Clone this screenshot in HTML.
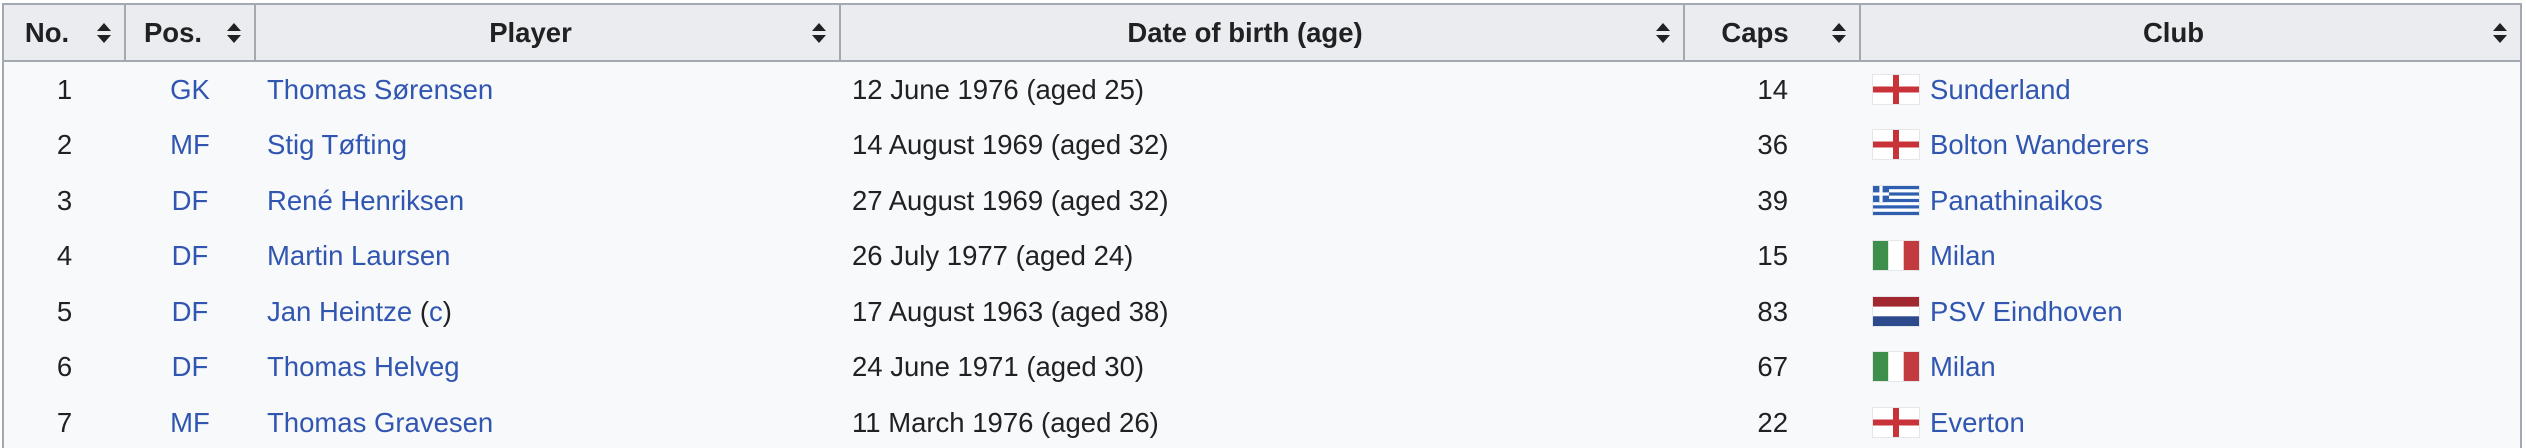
<!DOCTYPE html>
<html><head><meta charset="utf-8"><style>
html,body{margin:0;padding:0;background:#fff;width:2526px;height:448px;overflow:hidden}
#wrap{position:relative;width:2526px;height:448px;overflow:hidden}
table{position:absolute;left:2px;top:3px;border-collapse:collapse;table-layout:fixed;font-family:"Liberation Sans",Arial,sans-serif;font-size:27.5px;color:#202122;background:#f8f9fa;border:2px solid #a2a9b1}
th{background:#eaecf0;border:2px solid #a2a9b1;height:55px;padding:0;font-weight:bold;position:relative;text-align:center}
th span.t{display:block;padding-right:34px}
th .s{position:absolute;right:12px;top:50%;margin-top:-11px;width:16px;height:22px}
td{height:55.5px;padding:0 12px;border:none;white-space:nowrap}
a{color:#3056b2;text-decoration:none}
.c{text-align:center}
.r{text-align:right;padding-right:72px}
.f{display:inline-block;width:48px;height:31px;vertical-align:-6px;margin-right:10px;border:1px solid #e4e6ea;box-sizing:border-box;position:relative;overflow:hidden;background:#fff}
</style></head><body>
<div id="wrap">
<svg width="0" height="0" style="position:absolute"><defs>
<symbol id="srt" viewBox="0 0 16 22"><path d="M8 1 L15 9 H1 Z M1 13 H15 L8 21 Z" fill="#202122"/></symbol>
<symbol id="eng" viewBox="0 0 46 29" preserveAspectRatio="none"><rect width="46" height="29" fill="#fff"/><rect x="0" y="11.5" width="46" height="6" fill="#c8333a"/><rect x="20" y="0" width="6" height="29" fill="#c8333a"/></symbol>
<symbol id="ita" viewBox="0 0 46 29" preserveAspectRatio="none"><rect width="15.3" height="29" fill="#3f8f4c"/><rect x="15.3" width="15.4" height="29" fill="#fff"/><rect x="30.7" width="15.3" height="29" fill="#c13b3f"/></symbol>
<symbol id="ned" viewBox="0 0 46 29" preserveAspectRatio="none"><rect width="46" height="9.7" fill="#a2282f"/><rect y="9.7" width="46" height="9.6" fill="#fff"/><rect y="19.3" width="46" height="9.7" fill="#2c4a8c"/></symbol>
<symbol id="gre" viewBox="0 0 46 29" preserveAspectRatio="none"><rect width="46" height="29" fill="#fff"/><g fill="#2f5fb0"><rect y="0" width="46" height="3.2"/><rect y="6.4" width="46" height="3.2"/><rect y="12.9" width="46" height="3.2"/><rect y="19.3" width="46" height="3.2"/><rect y="25.8" width="46" height="3.2"/><rect width="16" height="16.1"/></g><rect x="6.4" width="3.2" height="16.1" fill="#fff"/><rect y="6.4" width="16" height="3.2" fill="#fff"/></symbol>
</defs></svg>
<table>
<colgroup><col style="width:122px"><col style="width:130px"><col style="width:585px"><col style="width:844px"><col style="width:176px"><col style="width:661px"></colgroup>
<tr>
<th><span class="t">No.</span><svg class="s"><use href="#srt"/></svg></th>
<th><span class="t">Pos.</span><svg class="s"><use href="#srt"/></svg></th>
<th><span class="t">Player</span><svg class="s"><use href="#srt"/></svg></th>
<th><span class="t">Date of birth (age)</span><svg class="s"><use href="#srt"/></svg></th>
<th><span class="t">Caps</span><svg class="s"><use href="#srt"/></svg></th>
<th><span class="t">Club</span><svg class="s"><use href="#srt"/></svg></th>
</tr>
<tr><td class="c">1</td><td class="c"><a>GK</a></td><td><a>Thomas Sørensen</a></td><td>12 June 1976 (aged 25)</td><td class="r">14</td><td><svg class="f"><use href="#eng"/></svg><a>Sunderland</a></td></tr>
<tr><td class="c">2</td><td class="c"><a>MF</a></td><td><a>Stig Tøfting</a></td><td>14 August 1969 (aged 32)</td><td class="r">36</td><td><svg class="f"><use href="#eng"/></svg><a>Bolton Wanderers</a></td></tr>
<tr><td class="c">3</td><td class="c"><a>DF</a></td><td><a>René Henriksen</a></td><td>27 August 1969 (aged 32)</td><td class="r">39</td><td><svg class="f"><use href="#gre"/></svg><a>Panathinaikos</a></td></tr>
<tr><td class="c">4</td><td class="c"><a>DF</a></td><td><a>Martin Laursen</a></td><td>26 July 1977 (aged 24)</td><td class="r">15</td><td><svg class="f"><use href="#ita"/></svg><a>Milan</a></td></tr>
<tr><td class="c">5</td><td class="c"><a>DF</a></td><td><a>Jan Heintze</a> (<a>c</a>)</td><td>17 August 1963 (aged 38)</td><td class="r">83</td><td><svg class="f"><use href="#ned"/></svg><a>PSV Eindhoven</a></td></tr>
<tr><td class="c">6</td><td class="c"><a>DF</a></td><td><a>Thomas Helveg</a></td><td>24 June 1971 (aged 30)</td><td class="r">67</td><td><svg class="f"><use href="#ita"/></svg><a>Milan</a></td></tr>
<tr><td class="c">7</td><td class="c"><a>MF</a></td><td><a>Thomas Gravesen</a></td><td>11 March 1976 (aged 26)</td><td class="r">22</td><td><svg class="f"><use href="#eng"/></svg><a>Everton</a></td></tr>
</table>
</div>
</body></html>
